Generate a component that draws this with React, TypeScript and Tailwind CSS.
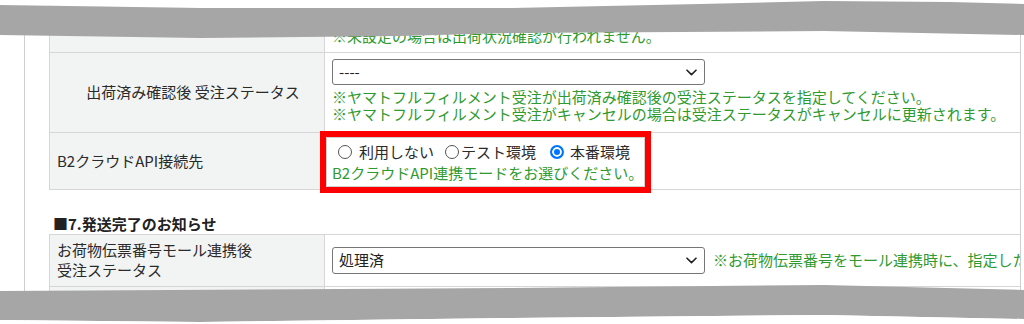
import React from 'react';

const Select: React.FC<{ value: string; height: string }> = ({ value, height }) => (
  <div
    className={`flex w-[373px] ${height} shrink-0 items-center justify-between rounded-[3px] border border-[#767676] bg-white pl-[6px] pr-[7px] text-[#222]`}
  >
    <span>{value}</span>
    <svg width="11" height="7" viewBox="0 0 11 7" fill="none">
      <path d="M1 1.2 L5.5 5.6 L10 1.2" stroke="#222" strokeWidth="1.6" strokeLinecap="round" strokeLinejoin="round" />
    </svg>
  </div>
);

const TornEdges: React.FC = () => (
  <svg className="pointer-events-none absolute left-0 top-0" width="1024" height="324" viewBox="0 0 1024 324">
    <polygon fill="#ffffff" points="0,0 1024,0 1024,4 950,2 824,1 700,4 512,8 200,8 0,5" />
    <polygon
      fill="#a6a6a6"
      points="0,5 200,8 512,8 700,4 824,1 950,2 1024,4 1024,35 824,31 512,33 400,36 200,38 0,35"
    />
    <polygon
      fill="#a6a6a6"
      points="0,291 512,288 824,285 1024,290 1024,319 824,315 512,318 200,322 0,320"
    />
    <polygon fill="#ffffff" points="0,320 200,322 512,318 824,315 1024,319 1024,324 0,324" />
  </svg>
);

const radio =
  'm-0 h-[14px] w-[14px] shrink-0 appearance-none rounded-full border-[1.5px] border-[#555] bg-white checked:border-2 checked:border-[#0075ff] checked:bg-[#0075ff] checked:shadow-[inset_0_0_0_2px_#ffffff]';

export default function App() {
  const green = 'text-[#2f9a2f]';

  return (
    <div className="relative h-[324px] w-[1024px] overflow-hidden bg-white font-['Noto_Sans_CJK_JP','Noto_Sans',sans-serif] text-[15px] text-[#2a2a2a]">
      <div className="ml-[24px] h-full w-[997px] border-x border-[#cfcfcf] pl-[24px]">
        {/* 設定テーブル */}
        <div className="border-l border-[#d6d6d6]">
          <div className="flex border-b border-[#d6d6d6]">
            <div className="w-[275px] shrink-0 border-r border-[#d6d6d6] bg-[#f2f4f3]" />
            <div className={`flex-1 pl-[7px] pt-[27px] pb-[8px] leading-[17px] ${green}`}>
              ※未設定の場合は出荷状況確認が行われません。
            </div>
          </div>

          <div className="flex border-b border-[#d6d6d6]">
            <div className="flex w-[275px] shrink-0 items-center justify-center border-r border-[#d6d6d6] bg-[#f2f4f3] pl-[12px]">
              出荷済み確認後 受注ステータス
            </div>
            <div className="flex-1 pl-[7px] pt-[6px] pb-[10px]">
              <Select value="----" height="h-[26px]" />
              <div className={`mt-[3px] leading-[17px] whitespace-nowrap ${green}`}>
                <div>※ヤマトフルフィルメント受注が出荷済み確認後の受注ステータスを指定してください。</div>
                <div>※ヤマトフルフィルメント受注がキャンセルの場合は受注ステータスがキャンセルに更新されます。</div>
              </div>
            </div>
          </div>

          <div className="flex border-b border-[#d6d6d6]">
            <div className="flex w-[275px] shrink-0 items-center border-r border-[#d6d6d6] bg-[#f2f4f3] pl-[7px]">
              B2クラウドAPI接続先
            </div>
            <div className="relative flex-1 pl-[7px] pt-[8px] pb-[6px]">
              <div className="flex h-[22px] items-center">
                <input type="radio" name="b2api" className={`${radio} ml-[6px] mr-[7px]`} />
                <span>利用しない</span>
                <input type="radio" name="b2api" className={`${radio} ml-[11px] mr-[2px]`} />
                <span>テスト環境</span>
                <input type="radio" name="b2api" defaultChecked className={`${radio} ml-[14px] mr-[6px]`} />
                <span>本番環境</span>
              </div>
              <div className={`leading-[20px] ${green}`}>B2クラウドAPI連携モードをお選びください。</div>
              {/* 注記用の赤枠 */}
              <div className="absolute left-[-5px] top-[-2px] h-[62px] w-[331px] border-[6px] border-[#ff0000] shadow-[inset_0_0_0_1px_#d0d0d0]" />
            </div>
          </div>
        </div>

        <div className="mt-[24px] pl-[4px] font-bold leading-[20px] text-[#222]">■7.発送完了のお知らせ</div>

        <div className="border-l border-t border-[#d6d6d6]">
          <div className="flex border-b border-[#d6d6d6]">
            <div className="w-[275px] shrink-0 border-r border-[#d6d6d6] bg-[#f2f4f3] pl-[7px] pt-[5px] pb-[6px] leading-[20px]">
              <div>お荷物伝票番号モール連携後</div>
              <div>受注ステータス</div>
            </div>
            <div className="flex min-w-0 flex-1 items-center overflow-hidden whitespace-nowrap pl-[7px]">
              <Select value="処理済" height="h-[27px]" />
              <span className={`ml-[8px] ${green}`}>※お荷物伝票番号をモール連携時に、指定した受注ステータスに更新します。</span>
            </div>
          </div>
          <div className="flex h-[50px] border-b border-[#d6d6d6]">
            <div className="w-[275px] shrink-0 border-r border-[#d6d6d6] bg-[#f2f4f3]" />
            <div className="flex-1" />
          </div>
        </div>
      </div>

      <TornEdges />
    </div>
  );
}
